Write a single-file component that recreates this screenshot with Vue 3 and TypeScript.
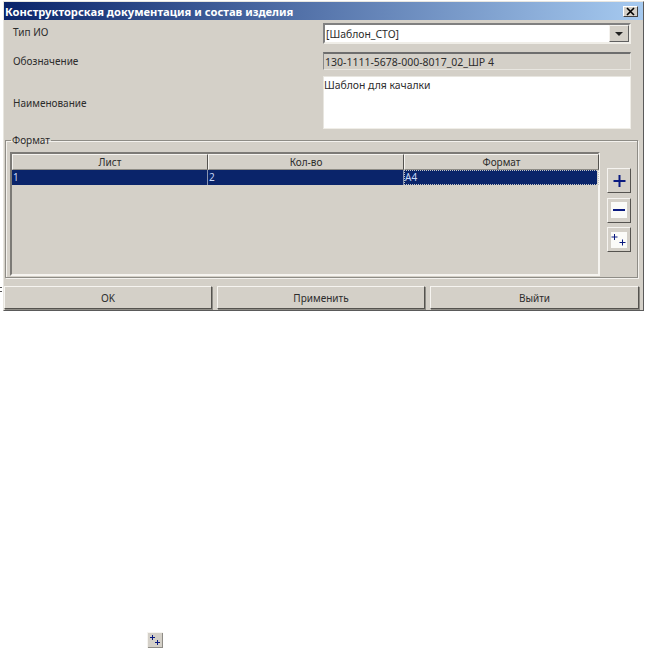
<script setup lang="ts">
const columns: string[] = ['Лист', 'Кол-во', 'Формат']
const cells: string[] = ['1', '2', 'А4']
const actions: string[] = ['OK', 'Применить', 'Выйти']
</script>

<template>
  <div class="page">
    <i class="mark"></i>
    <div class="window">
      <div class="titlebar">
        <span class="title">Конструкторская документация и состав изделия</span>
        <button class="close" type="button" aria-label="Закрыть">
          <svg width="9" height="9" viewBox="0 0 9 9"><path d="M1 1l7 7M8 1l-7 7" stroke="#000" stroke-width="1.6" fill="none" /></svg>
        </button>
      </div>

      <div class="form">
        <div class="row row-combo">
          <span class="label label-up">Тип ИО</span>
          <div class="combo field">
            <span>[Шаблон_СТО]</span>
            <span class="combo-btn"><i class="arrow"></i></span>
          </div>
        </div>
        <div class="row row-ro">
          <span class="label">Обозначение</span>
          <div class="readonly">130-1111-5678-000-8017_02_ШР 4</div>
        </div>
        <div class="row row-area">
          <span class="label">Наименование</span>
          <div class="area field">Шаблон для качалки</div>
        </div>
      </div>

      <fieldset class="group">
        <legend>Формат</legend>
        <div class="group-body">
          <div class="table">
            <div class="thead">
              <div v-for="c in columns" :key="c" class="th">{{ c }}</div>
            </div>
            <div class="tr">
              <div v-for="(c, i) in cells" :key="c" class="td" :class="{ focus: i === 2 }">{{ c }}</div>
            </div>
          </div>
          <div class="tools">
            <button class="tool" type="button" aria-label="Добавить">
              <svg width="16" height="16" viewBox="0 0 16 16"><path d="M8.500 2v12M2.500 8h12" stroke="#0a1a80" stroke-width="2" fill="none" /></svg>
            </button>
            <button class="tool white" type="button" aria-label="Удалить">
              <svg width="16" height="16" viewBox="0 0 16 16"><path d="M2 8h12" stroke="#0a1a80" stroke-width="2" fill="none" /></svg>
            </button>
            <button class="tool white" type="button" aria-label="Добавить несколько">
              <svg width="16" height="16" viewBox="0 0 16 16"><path d="M3.500 2v6M.5 5h6M11.500 7.500v6M8.500 10.500h6" stroke="#0a1a80" stroke-width="1" fill="none" /></svg>
            </button>
          </div>
        </div>
      </fieldset>

      <div class="actions">
        <button v-for="a in actions" :key="a" class="action" type="button">{{ a }}</button>
      </div>
    </div>

    <div class="loose-icon">
      <svg width="16" height="16" viewBox="0 0 16 16"><path d="M5.500 3v5M3 5.500h5M10.500 8v5M8 10.500h5" stroke="#0a1a80" stroke-width="1" fill="none" /></svg>
    </div>
  </div>
</template>

<style>
html, body { background: #fff; }
</style>

<style scoped>
.page {
  position: relative;
  width: 646px;
  height: 651px;
  padding: 1px 0 0 3px;
  box-sizing: border-box;
  font-family: "Noto Sans", "DejaVu Sans", sans-serif;
  font-size: 10px;
  color: #2c2c2c;
  overflow: hidden;
}
.mark {
  position: absolute;
  left: 0;
  top: 287px;
  width: 2px;
  height: 5px;
  border-top: 1px solid #555;
  border-bottom: 1px solid #555;
  box-sizing: border-box;
}
.window {
  width: 641px;
  height: 310px;
  box-sizing: border-box;
  background: #d4d0c8;
  border: 1px solid;
  border-color: #e8e6e0 #5a5a5a #5a5a5a #e8e6e0;
  display: flex;
  flex-direction: column;
}
.titlebar {
  height: 18px;
  flex: none;
  display: flex;
  align-items: center;
  justify-content: space-between;
  padding: 0 5px 0 1px;
  background: linear-gradient(90deg, #0a246a, #a6caf0);
}
.title { color: #fff; font-weight: 700; font-size: 11.2px; }
.close {
  width: 15px;
  height: 11px;
  padding: 0;
  display: flex;
  align-items: center;
  justify-content: center;
  background: #d4d0c8;
  border: 1px solid;
  border-color: #fff #404040 #404040 #fff;
}
.form { padding: 3px 12px 0 9px; flex: none; }
.row { display: flex; align-items: center; justify-content: space-between; }
.row-combo { height: 21px; }
.row-ro { height: 18px; margin-top: 8px; }
.row-area { height: 53px; margin-top: 6px; }
.label { font-size: 10px; }
.label-up { margin-top: -3px; }
.field, .readonly {
  width: 308px;
  box-sizing: border-box;
  border: 1px solid;
  font-size: 10.4px;
}
.field { background: #fff; border-color: #808080 #f0eee8 #f0eee8 #808080; }
.combo {
  height: 21px;
  border-width: 2px;
  display: flex;
  align-items: center;
  justify-content: space-between;
  padding-left: 1px;
}
.combo-btn {
  width: 20px;
  height: 17px;
  display: flex;
  align-items: center;
  justify-content: center;
  background: #d4d0c8;
  border: 1px solid;
  border-color: #f4f2ee #606060 #606060 #f4f2ee;
  box-sizing: border-box;
}
.arrow {
  width: 0;
  height: 0;
  border: 4px solid transparent;
  border-top-color: #222;
  border-bottom: 0;
}
.readonly {
  height: 18px;
  line-height: 16px;
  padding-left: 1px;
  background: #d4d0c8;
  border-color: #6e6e6e #e8e6e0 #e8e6e0 #8a8a8a;
  border-top-width: 2px;
  font-size: 10.5px;
}
.area {
  height: 53px;
  padding: 1px 0 0 0;
  line-height: 14px;
  border-top-color: #e8e6e0;
  border-left-color: #e8e6e0;
}
.group {
  margin: 5px 0 0 1px;
  padding: 0 3px 0 4px;
  width: 633px;
  height: 144px;
  box-sizing: border-box;
  flex: none;
  border: 1px solid #8e8c86;
  box-shadow: inset 1px 1px 0 #f4f2ee, 1px 1px 0 #f4f2ee;
  min-width: 0;
}
legend { padding: 0 1px; margin-left: 1px; font-size: 10px; line-height: 12px; }
.group-body { display: flex; gap: 7px; margin-top: 6px; }
.table {
  width: 590px;
  height: 124px;
  box-sizing: border-box;
  border: 2px solid;
  border-color: #7c7a76 #f6f4f0 #f6f4f0 #7c7a76;
}
.thead, .tr { display: grid; grid-template-columns: 196px 196px 195px; }
.th {
  height: 16px;
  line-height: 14px;
  text-align: center;
  box-sizing: border-box;
  border: 1px solid;
  border-color: #f6f4f0 #55534f #8e8c86 #f6f4f0;
  font-size: 10px;
}
.tr { background: #0a246a; height: 15px; margin-right: 1px; color: #c8d8f8; }
.td {
  line-height: 14px;
  padding-left: 1px;
  font-size: 10px;
  border-right: 1px solid #8a94b0;
}
.td:last-child { border-right: 0; }
.td.focus { outline: 1px dotted #c4c4c4; outline-offset: -1px; }
.tools { display: flex; flex-direction: column; gap: 4.500px; padding-top: 16px; }
.tool {
  width: 24px;
  height: 25px;
  padding: 0;
  display: flex;
  align-items: center;
  justify-content: center;
  background: #d4d0c8;
  border: 1px solid;
  border-color: #f6f4f0 #55534f #55534f #f6f4f0;
}
.tool.white svg { background: #fbfbf8; }
.actions {
  display: grid;
  grid-template-columns: 208px 208px 209px;
  column-gap: 5px;
  margin-top: 8px;
}
.action {
  height: 23px;
  padding: 0;
  font: inherit;
  color: #2c2c2c;
  background: #d4d0c8;
  border: 1px solid;
  border-color: #f6f4f0 #55534f #55534f #f6f4f0;
  box-shadow: 1px 1px 0 #8e8c86;
}
.loose-icon {
  width: 16px;
  height: 16px;
  margin: 321px 0 0 144px;
  background: #d4d0c8;
  box-shadow: inset 1px 1px 0 #f6f4f0, inset -1px -1px 0 #8e8c86;
}
</style>
